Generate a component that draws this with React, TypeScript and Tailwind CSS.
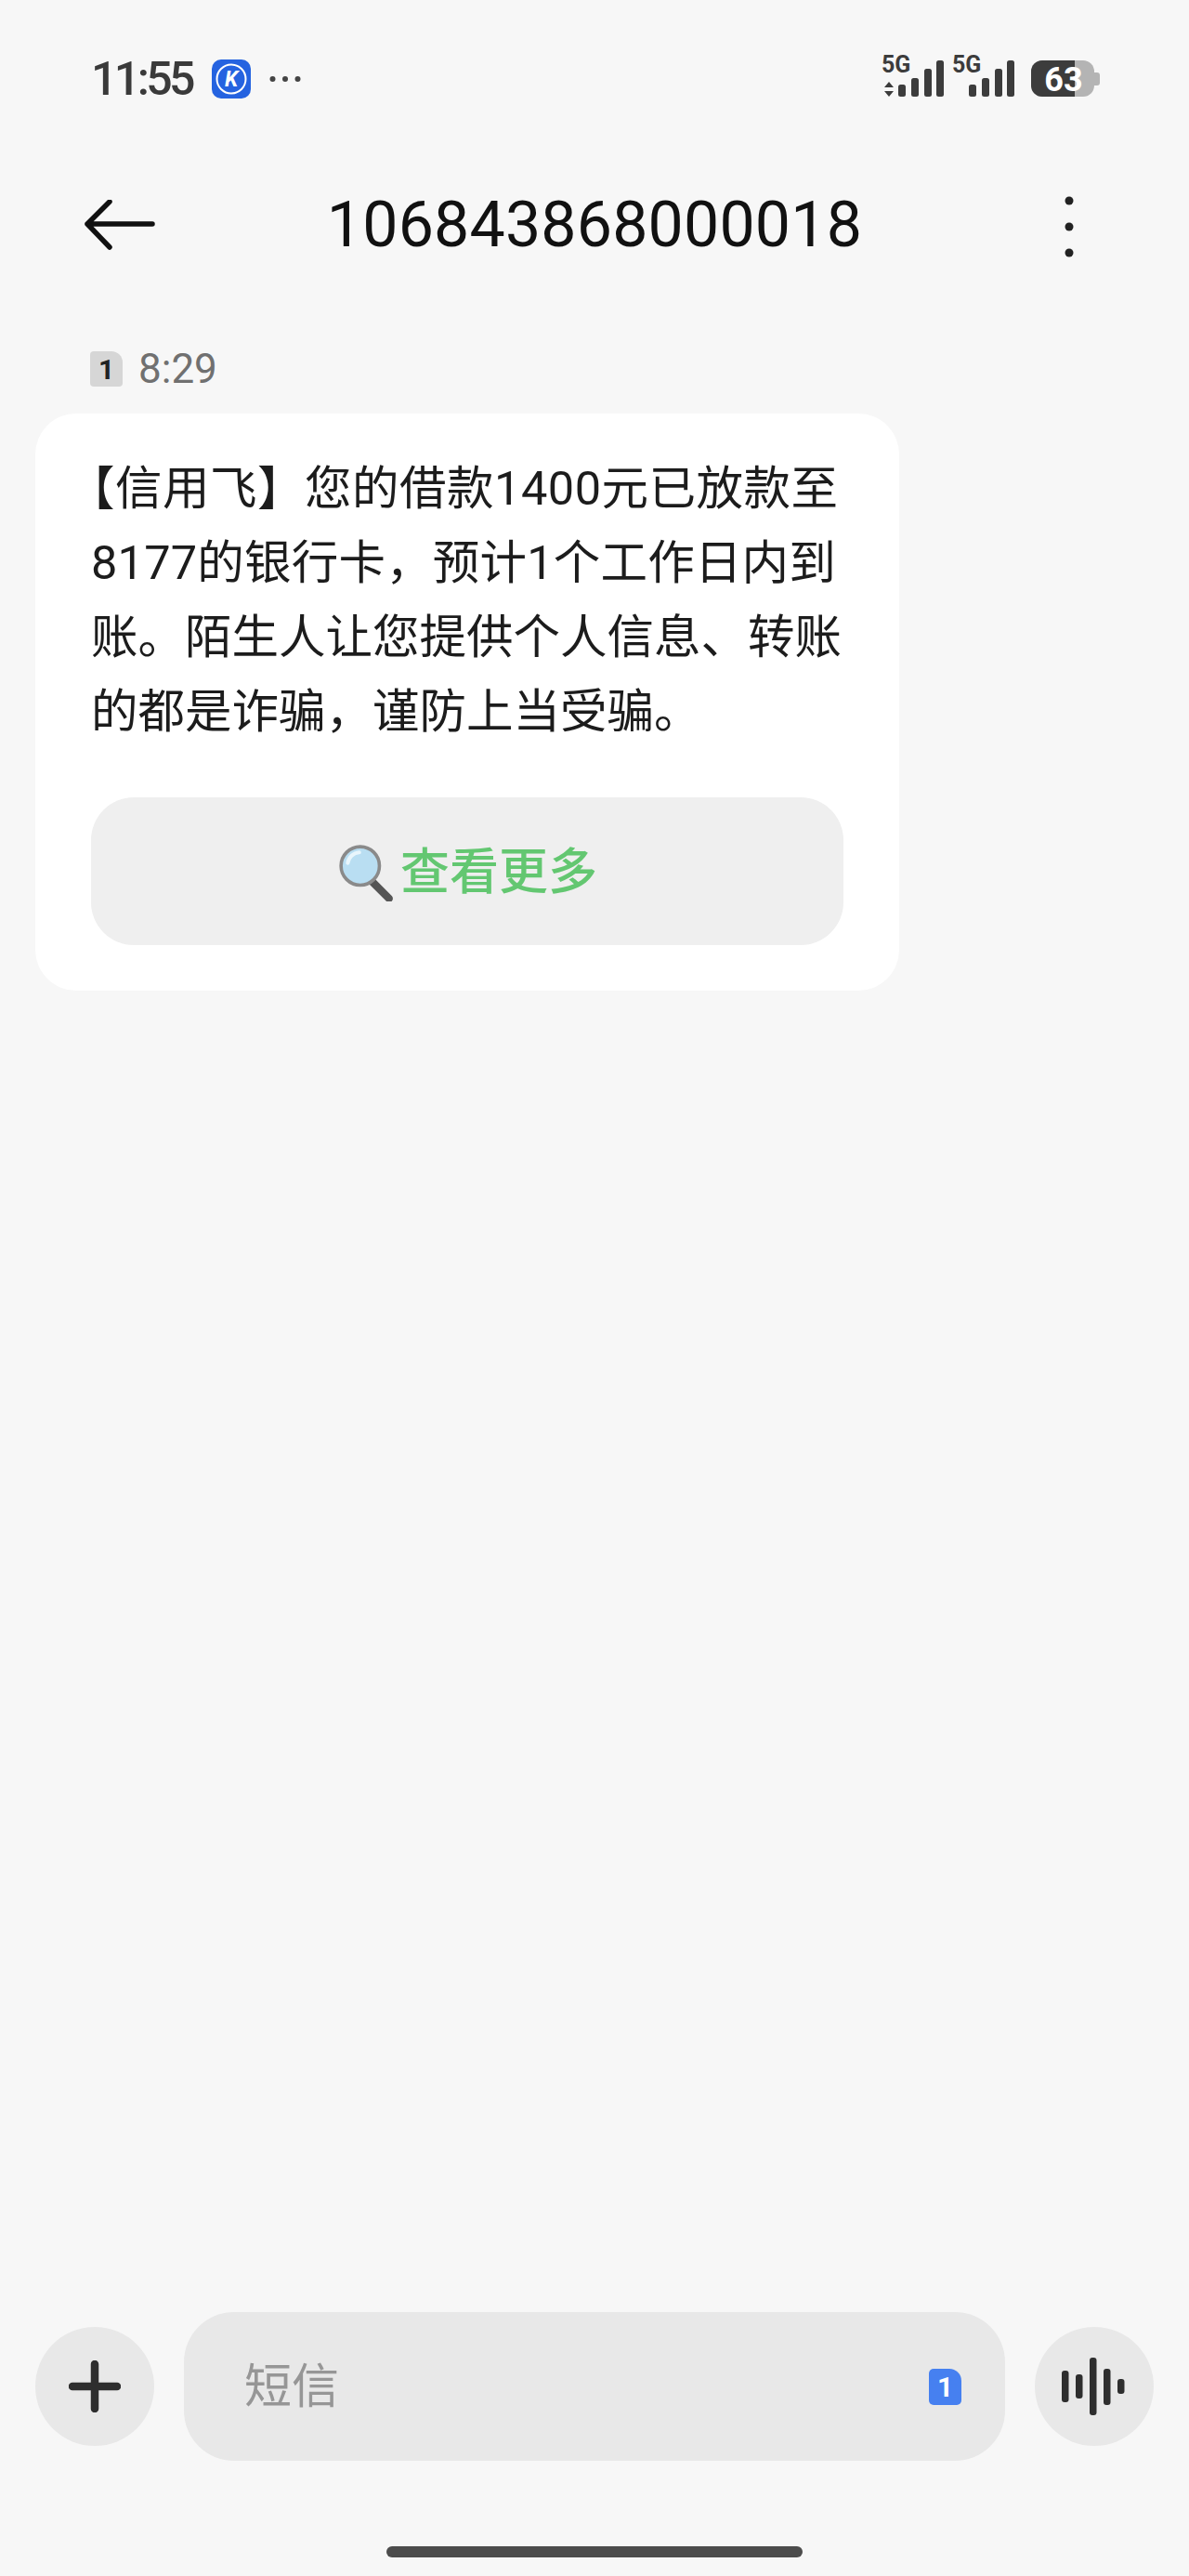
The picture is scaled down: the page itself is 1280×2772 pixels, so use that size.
export default function App() {
  const font = { fontFamily: 'Roboto, "Noto Sans CJK SC", sans-serif' };
  return (
    <div style={font} className="flex h-[2772px] w-[1280px] flex-col overflow-hidden bg-[#f7f7f7]">
      {/* status bar */}
      <div className="flex h-[166px] items-start justify-between pl-[98px] pr-[90px] pt-[40px]">
        <div className="mt-[20px] flex h-[50px] items-center">
          <span className="w-[112px] text-[50px] font-medium leading-[50px] tracking-[-3.6px] text-[#3a3a3a]">11:55</span>
          <svg className="ml-[18px]" width="42" height="42" viewBox="0 0 42 42">
            <rect width="42" height="42" rx="10" fill="#2563e0" />
            <circle cx="21" cy="21" r="15.5" fill="none" stroke="#fff" strokeWidth="2" />
            <text x="21" y="29" textAnchor="middle" fontSize="23" fontWeight="700" fontStyle="italic" fill="#fff" fontFamily="Roboto">K</text>
          </svg>
          <svg className="ml-[20px]" width="36" height="8" viewBox="0 0 36 8" fill="#444">
            <circle cx="3.5" cy="4" r="3" />
            <circle cx="17" cy="4" r="3" />
            <circle cx="30.5" cy="4" r="3" />
          </svg>
        </div>
        <svg width="250" height="74" viewBox="940 40 250 74">
          <text x="949" y="78" fontSize="25" fontWeight="700" fill="#3c3c3c" fontFamily="Roboto">5G</text>
          <path d="M957 88l5 6h-10zM957 104l5-6h-10z" fill="#3c3c3c" />
          <rect x="967" y="91" width="8" height="13" rx="2.5" fill="#3c3c3c" />
          <rect x="981" y="84" width="8" height="20" rx="2.5" fill="#3c3c3c" />
          <rect x="995" y="74" width="8" height="30" rx="2.5" fill="#3c3c3c" />
          <rect x="1008" y="65" width="8" height="39" rx="2.5" fill="#3c3c3c" />
          <text x="1025" y="78" fontSize="25" fontWeight="700" fill="#3c3c3c" fontFamily="Roboto">5G</text>
          <rect x="1043" y="91" width="8" height="13" rx="2.5" fill="#3c3c3c" />
          <rect x="1057" y="84" width="8" height="20" rx="2.5" fill="#3c3c3c" />
          <rect x="1071" y="74" width="8" height="30" rx="2.5" fill="#3c3c3c" />
          <rect x="1084" y="65" width="8" height="39" rx="2.5" fill="#3c3c3c" />
          <rect x="1110" y="65" width="68" height="39" rx="12" fill="#b4b4b4" />
          <path d="M1122 65h35v39h-35a12 12 0 0 1-12-12v-15a12 12 0 0 1 12-12z" fill="#3c3c3c" />
          <path d="M1178 78h3a3 3 0 0 1 3 3v8a3 3 0 0 1-3 3h-3z" fill="#b4b4b4" />
          <text x="1145" y="98" textAnchor="middle" fontSize="36" fontWeight="700" fill="#fff" fontFamily="Roboto">63</text>
        </svg>
      </div>

      {/* header */}
      <div className="grid h-[150px] grid-cols-[1fr_auto_1fr] items-start px-[91px]">
        <svg className="mt-[49px]" width="76" height="54" viewBox="0 0 76 54" fill="none" stroke="#111" strokeWidth="5.5" strokeLinecap="round" strokeLinejoin="round">
          <path d="M3 26h70M27 2L3 26l24 25" />
        </svg>
        <div className="mt-[36px] text-[68px] leading-[80px] tracking-[0.2px] text-[#111]">106843868000018</div>
        <svg className="mr-[33px] mt-[45px] justify-self-end" width="10" height="66" viewBox="0 0 10 66" fill="#222">
          <circle cx="5" cy="5" r="4.5" />
          <circle cx="5" cy="33" r="4.5" />
          <circle cx="5" cy="61" r="4.5" />
        </svg>
      </div>

      {/* messages */}
      <div className="flex flex-1 flex-col px-[38px]">
        <div className="mt-[59px] flex h-[44px] items-center pl-[59px]">
          <div className="flex h-[38px] w-[35px] items-center justify-center rounded-[4px] rounded-tr-[12px] bg-[#d6d6d6] text-[30px] font-bold text-[#222]">1</div>
          <span className="ml-[17px] text-[44px] leading-[44px] text-[#707070]">8:29</span>
        </div>
        <div className="mt-[26px] w-[930px] rounded-[44px] bg-white px-[60px] pb-[49px] pt-[41px]">
          <div className="text-[50.5px] leading-[80px] text-[#1c1c1c]">
            <div className="-ml-[25px] whitespace-nowrap tracking-[0.5px]">【信用飞】您的借款1400元已放款至</div>
            <div className="whitespace-nowrap tracking-[0.2px]">8177的银行卡，预计1个工作日内到</div>
            <div className="whitespace-nowrap">账。陌生人让您提供个人信息、转账</div>
            <div className="whitespace-nowrap">的都是诈骗，谨防上当受骗。</div>
          </div>
          <div className="mt-[52px] flex h-[159px] items-center justify-center rounded-[46px] bg-[#efefef] pt-[2px]">
            <svg width="62" height="62" viewBox="0 0 60 60">
              <path d="M35 38l19 19" stroke="#555" strokeWidth="8" strokeLinecap="round" />
              <circle cx="24" cy="23" r="20" fill="#b9def2" stroke="#8a8a8a" strokeWidth="3.5" />
              <path d="M11 20a13 13 0 0 1 12-11" stroke="#e9f6fc" strokeWidth="4" fill="none" strokeLinecap="round" />
            </svg>
            <span className="ml-[6px] text-[53px] font-medium leading-[60px] text-[#63c771]">查看更多</span>
          </div>
        </div>
      </div>

      {/* composer */}
      <div className="flex items-center px-[38px]">
        <div className="flex h-[128px] w-[128px] items-center justify-center rounded-full bg-[#e8e8e8]">
          <svg width="56" height="56" viewBox="0 0 56 56" stroke="#2e2e2e" strokeWidth="8.5" strokeLinecap="round">
            <path d="M28 4v48M4 28h48" />
          </svg>
        </div>
        <div className="ml-[32px] flex h-[160px] w-[884px] items-center justify-between rounded-[54px] bg-[#e8e8e8] pl-[65px] pr-[47px]">
          <span className="mt-[2px] text-[51px] leading-[60px] text-[#969696]">短信</span>
          <div className="flex h-[39px] w-[35px] items-center justify-center rounded-[5px] rounded-tr-[13px] bg-[#4680f0] text-[30px] font-bold text-white">1</div>
        </div>
        <div className="ml-[32px] flex h-[128px] w-[128px] items-center justify-center rounded-full bg-[#e8e8e8]">
          <svg width="70" height="62" viewBox="0 0 70 62" fill="#2e2e2e">
            <rect x="0" y="14" width="7.5" height="34" rx="3" />
            <rect x="15" y="18" width="7.5" height="26" rx="3" />
            <rect x="30" y="0" width="7.5" height="62" rx="3" />
            <rect x="45" y="12" width="7.5" height="39" rx="3" />
            <rect x="60" y="23" width="7.5" height="16" rx="3" />
          </svg>
        </div>
      </div>

      {/* home indicator */}
      <div className="flex h-[124px] items-start justify-center pt-[92px]">
        <div className="h-[12px] w-[448px] rounded-full bg-[#4c4c4c]" />
      </div>
    </div>
  );
}
